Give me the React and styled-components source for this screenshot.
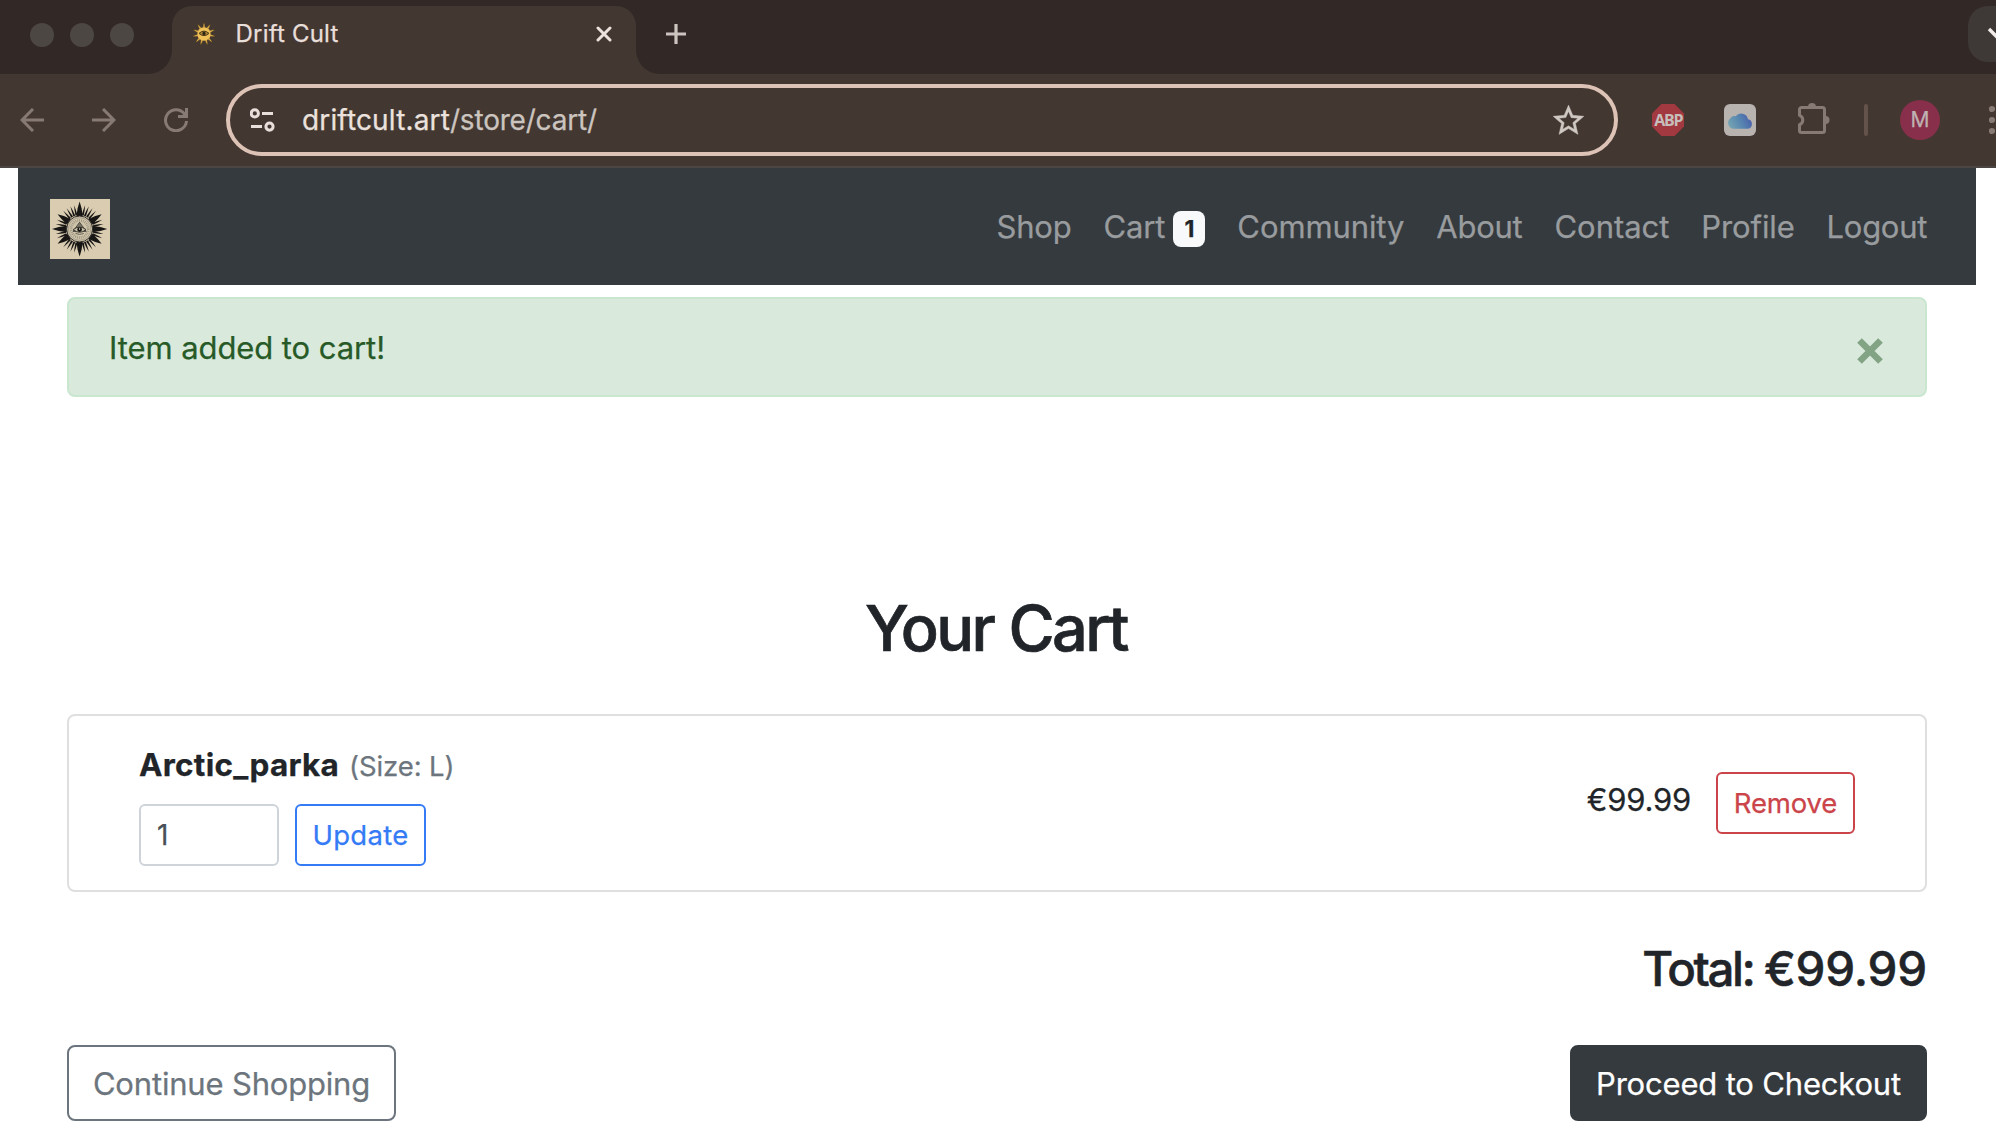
import React from "react";
import styled, { createGlobalStyle } from "styled-components";

const GlobalStyle = createGlobalStyle`
  *, *::before, *::after { box-sizing: border-box; }
  body {
    margin: 0;
    background: #fff;
    color: #212529;
    font-family: Inter, "Liberation Sans", sans-serif;
    -webkit-text-stroke: 0.25px currentColor;
  }
  button, input { font-family: inherit; -webkit-text-stroke: 0.25px currentColor; }
  svg { flex: none; }
`;

const Window = styled.div`
  display: flex;
  flex-direction: column;
  width: 100%;
  height: 1148px;
  overflow: hidden;
`;

/* ---------- browser chrome ---------- */

const TabStrip = styled.div`
  display: flex;
  align-items: flex-start;
  flex: none;
  height: 74px;
  padding: 6px 0 0 30px;
  background: #322926;
`;

const Lights = styled.div`
  display: flex;
  gap: 16px;
  padding-top: 17px;
  margin-right: 38px;
`;

const Light = styled.span`
  width: 24px;
  height: 24px;
  border-radius: 50%;
  background: #4c4742;
`;

const Tab = styled.div`
  position: relative;
  display: flex;
  align-items: center;
  width: 464px;
  height: 68px;
  padding: 0 24px 13px 19px;
  border-radius: 20px 20px 0 0;
  background: #433732;

  &::before,
  &::after {
    content: "";
    position: absolute;
    bottom: 0;
    width: 24px;
    height: 24px;
  }
  &::before {
    left: -24px;
    background: radial-gradient(circle at 0 0, transparent 23.5px, #433732 24.5px);
  }
  &::after {
    right: -24px;
    background: radial-gradient(circle at 100% 0, transparent 23.5px, #433732 24.5px);
  }
`;

const TabTitle = styled.span`
  flex: 1;
  margin-left: 18.5px;
  color: #e9dfda;
  font-size: 24px;
  line-height: 30px;
  letter-spacing: 0.21px;
`;

const NewTab = styled.span`
  display: flex;
  margin: 18px auto 0 30px;
`;

const TabSearch = styled.div`
  display: flex;
  align-items: center;
  width: 28px;
  height: 56px;
  padding-left: 18px;
  border-radius: 20px 0 0 20px;
  background: #3e3936;
  overflow: hidden;
`;

const Toolbar = styled.div`
  display: flex;
  align-items: center;
  flex: none;
  height: 94px;
  padding: 0 1px 0 20px;
  background: #433732;
  border-bottom: 2px solid #4b4543;
`;

const NavIcons = styled.div`
  display: flex;
  gap: 48px;
  margin-right: 38px;
`;

const Omnibox = styled.div`
  display: flex;
  align-items: center;
  flex: 1;
  height: 72px;
  padding: 0 27px 0 20px;
  border: 4px solid #ddc3b6;
  border-radius: 36px;
`;

const Url = styled.span`
  flex: 1;
  margin-left: 27px;
  color: #cbc4bf;
  font-size: 28px;
  line-height: 36px;
  letter-spacing: -0.2px;
`;

const Domain = styled.span`
  color: #ebe2de;
  letter-spacing: 0.15px;
`;

const Extensions = styled.div`
  display: flex;
  align-items: center;
  margin-left: 34px;
`;

const CloudTile = styled.span`
  display: flex;
  align-items: center;
  justify-content: center;
  width: 32px;
  height: 32px;
  margin: 0 40px;
  border-radius: 6px;
  background: #b9b3b0;
`;

const Divider = styled.span`
  width: 4px;
  height: 32px;
  margin: 0 32px;
  border-radius: 2px;
  background: #64534a;
`;

const Avatar = styled.span`
  width: 40px;
  height: 40px;
  margin-right: 48px;
  border-radius: 50%;
  background: #882f4b;
  color: #bfb1b1;
  font-size: 21px;
  line-height: 40px;
  text-align: center;
`;

/* ---------- store page ---------- */

const Page = styled.div`
  display: flex;
  flex-direction: column;
  width: 1958px;
  margin-left: 18px;
`;

const Navbar = styled.nav`
  display: flex;
  align-items: center;
  justify-content: space-between;
  height: 117px;
  padding: 5px 49px 0 32px;
  background: #353a3e;
`;

const NavLinks = styled.div`
  display: flex;
  gap: 32px;
  padding-bottom: 5px;
`;

const NavLink = styled.a`
  display: flex;
  align-items: center;
  color: #999c9e;
  font-size: 31px;
  line-height: 48px;
  letter-spacing: ${(p) => p.$track}px;
`;

const Badge = styled.span`
  width: 32px;
  height: 36px;
  margin: 5px 0 0 8px;
  border-radius: 8px;
  background: #f8f9fa;
  color: #212529;
  font-size: 23px;
  font-weight: 700;
  line-height: 37px;
  text-align: center;
  letter-spacing: 0;
`;

const Content = styled.main`
  display: flex;
  flex-direction: column;
  padding: 12px 49px 0;
`;

const Alert = styled.div`
  display: flex;
  align-items: center;
  justify-content: space-between;
  height: 100px;
  padding: 0 42.5px 0 40px;
  border: 2px solid #c9e6cf;
  border-radius: 8px;
  background: #d9eadc;
  color: #285a28;
  font-size: 31px;
  letter-spacing: -0.08px;
`;

const Dismiss = styled.span`
  display: flex;
  padding-top: 9px;
`;

const Title = styled.h1`
  margin: 192px 0 47px;
  padding-right: 2px;
  font-size: 63px;
  font-weight: 500;
  line-height: 78px;
  letter-spacing: -2.6px;
  word-spacing: 1px;
  text-align: center;
  -webkit-text-stroke: 0.7px currentColor;
`;

const Card = styled.div`
  display: flex;
  align-items: center;
  justify-content: space-between;
  height: 178px;
  padding: 0 70px;
  border: 2px solid #dfdfdf;
  border-radius: 8px;
`;

const Product = styled.div`
  display: flex;
  flex-direction: column;
  gap: 16px;
`;

const ProductName = styled.div`
  display: flex;
  align-items: baseline;
  gap: 10px;
  height: 48px;
  font-size: 31.5px;
  font-weight: 700;
  line-height: 50px;
  letter-spacing: 0.25px;
`;

const Size = styled.span`
  color: #6c757d;
  font-size: 27.5px;
  font-weight: 400;
  letter-spacing: -0.12px;
`;

const Controls = styled.div`
  display: flex;
  align-items: center;
  gap: ${(p) => p.$gap}px;
`;

const Quantity = styled.input`
  width: 140px;
  height: 62px;
  padding: 0 16px;
  border: 2px solid #ced4da;
  border-radius: 6px;
  background: #fff;
  color: #495057;
  font-size: 28px;
  outline: none;
`;

const SmallButton = styled.button`
  width: ${(p) => p.$width}px;
  height: 62px;
  padding: 0;
  border: 2px solid ${(p) => p.$color};
  border-radius: 6px;
  background: transparent;
  color: ${(p) => p.$color};
  font-size: 27.5px;
  letter-spacing: ${(p) => p.$track}px;
`;

const Price = styled.span`
  padding-bottom: 6px;
  font-size: 31px;
  line-height: 48px;
  letter-spacing: -0.2px;
`;

const Total = styled.h3`
  margin: 47px 0 46px;
  font-size: 47.5px;
  font-weight: 500;
  line-height: 60px;
  letter-spacing: -2.4px;
  text-align: right;
  -webkit-text-stroke: 0.5px currentColor;
`;

const Amount = styled.span`
  letter-spacing: -0.2px;
`;

const Actions = styled.div`
  display: flex;
  justify-content: space-between;
`;

const ActionButton = styled.button`
  width: ${(p) => p.$width}px;
  height: 76px;
  padding: 0;
  border: 2px solid ${(p) => (p.$solid ? "#353a3e" : "#6c757d")};
  border-radius: 8px;
  background: ${(p) => (p.$solid ? "#353a3e" : "transparent")};
  color: ${(p) => (p.$solid ? "#fff" : "#6c757d")};
  font-size: 31px;
  letter-spacing: -0.18px;
`;

/* ---------- drawings ---------- */

const ray = (cx, cy, angle, from, to, half) => {
  const a = (angle * Math.PI) / 180;
  const ux = Math.cos(a);
  const uy = -Math.sin(a);
  const pt = (r, o) => `${(cx + ux * r - uy * o).toFixed(2)} ${(cy + uy * r + ux * o).toFixed(2)}`;
  const mid = from + (to - from) * 0.55;
  return `M${pt(from, -half)}L${pt(mid, -half * 0.62)}L${pt(to, 0)}L${pt(mid, half * 0.62)}L${pt(from, half)}Z`;
};

const BIG = [0, 34, 90, 146, 180, 214, 270, 326];
const SMALL = [12, 22, 48, 58, 68, 77];
const smallRays = SMALL.flatMap((a) => [a, 180 - a, 180 + a, 360 - a]);

const SunLogo = () => (
  <svg width="60" height="60" viewBox="0 0 60 60">
    <rect width="60" height="60" fill="#d9ccb0" />
    <g fill="#171615">
      {BIG.map((a) => <path key={a} d={ray(29.6, 30, a, 12.5, a % 90 ? 26.6 : 27.6, 3.2)} />)}
      {smallRays.map((a) => <path key={a} d={ray(29.6, 30, a, 14, 24.4, 1.05)} />)}
    </g>
    <circle cx="29.6" cy="30" r="13" fill="#cfc4aa" stroke="#2f2e2a" strokeWidth="1" />
    <circle cx="29.6" cy="30" r="11.3" fill="none" stroke="#8e8775" strokeWidth="0.6" />
    <circle cx="29.6" cy="30" r="8.6" fill="none" stroke="#99917e" strokeWidth="2.6" strokeDasharray="0.8 1.1" />
    <path d="M29.6 23.2 36.2 32.4H23Z" fill="#7a7567" stroke="#3c3a34" strokeWidth="0.8" />
    <path d="M23.2 30.6q6.4-5 12.8 0-6.4 5.4-12.8 0Z" fill="#c9bfa6" stroke="#33312c" strokeWidth="0.9" />
    <circle cx="29.6" cy="30.6" r="2.3" fill="#11110f" />
    <circle cx="29.6" cy="30" r="0.7" fill="#efe6cf" />
    <path d="M25.5 34.5q4.1 1.8 8.2 0" fill="none" stroke="#5c594e" strokeWidth="0.9" />
  </svg>
);

const Favicon = () => (
  <svg width="26" height="26" viewBox="0 0 26 26">
    {[90, 57, 22, -12, -45, -72, -108, -135, 192, 158, 123].map((a) => (
      <path key={a} d={ray(13, 13, a, 6, 12.2, 1.3)} fill="#d9ab46" stroke="#3a2d1f" strokeWidth="0.6" />
    ))}
    <circle cx="13" cy="13" r="6.7" fill="#efc158" />
    <path d="M8 12.4q5-4.6 10 0-5 4.4-10 0Z" fill="#a98535" stroke="#4a3a1a" strokeWidth="1" />
    <circle cx="13" cy="12.4" r="1.6" fill="#2b2416" />
  </svg>
);

const Stroke = ({ w = 24, h = 24, color = "#877a74", width = 3, cap = "butt", d }) => (
  <svg width={w} height={h} viewBox={`0 0 ${w} ${h}`} fill="none" stroke={color} strokeWidth={width} strokeLinecap={cap}>
    <path d={d} />
  </svg>
);

const Tune = () => (
  <svg width="25" height="24" viewBox="0 0 25 24" fill="none" stroke="#e9dfda" strokeWidth="3">
    <circle cx="4.8" cy="5.4" r="3.6" />
    <path d="M12 5.4h11M1 18.6h11" />
    <circle cx="19.5" cy="18.6" r="3.6" />
  </svg>
);

const Star = () => (
  <svg width="37" height="37" viewBox="0 0 24 24" fill="#cfc7c2" stroke="#cfc7c2" strokeWidth="0.25">
    <path d="M22 9.24l-7.19-.62L12 2 9.19 8.63 2 9.24l5.46 4.73L5.82 21 12 17.27 18.18 21l-1.63-7.03L22 9.24zM12 15.4l-3.76 2.27 1-4.28-3.32-2.88 4.38-.38L12 6.1l1.71 4.04 4.38.38-3.32 2.88 1 4.28L12 15.4z" />
  </svg>
);

const AdBlock = () => (
  <svg width="32" height="32" viewBox="0 0 32 32">
    <path d="M9.4 0h13.2L32 9.4v13.2L22.6 32H9.4L0 22.6V9.4Z" fill="#a23940" />
    <text x="2.2" y="21.8" fill="#c6bebb" fontFamily="Open Sans, sans-serif" fontWeight="700" fontSize="16" letterSpacing="-1.2">ABP</text>
  </svg>
);

const Cloud = () => (
  <svg width="26" height="17" viewBox="0 0 26 17">
    <defs>
      <linearGradient id="sky" x1="0" y1="0.7" x2="1" y2="0.4">
        <stop offset="0" stopColor="#76a4b2" />
        <stop offset="0.55" stopColor="#5684b0" />
        <stop offset="1" stopColor="#4a5faa" />
      </linearGradient>
    </defs>
    <path d="M6 16.8A5.8 5.8 0 0 1 3.2 6.6 4.4 4.4 0 0 1 8.6 4.3 7 7 0 0 1 21 7.2 4.9 4.9 0 0 1 21 16.8Z" fill="url(#sky)" />
  </svg>
);

const Puzzle = () => (
  <svg width="36" height="36" viewBox="0 0 36 36">
    <path d="M5.5 5.5h21a2 2 0 0 1 2 2v21a2 2 0 0 1-2 2h-21a2 2 0 0 1-2-2v-5.8a5 5 0 0 0 0-9.4V7.5a2 2 0 0 1 2-2Z" fill="none" stroke="#877a74" strokeWidth="3" strokeLinejoin="round" />
    <path d="M12 5a4 4 0 0 1 8 0ZM29.5 14a4 4 0 0 1 0 8Z" fill="#877a74" />
  </svg>
);

const Dots = () => (
  <svg width="7" height="30" viewBox="0 0 7 30" fill="#877a74">
    <circle cx="4" cy="4" r="3.1" />
    <circle cx="4" cy="15" r="3.1" />
    <circle cx="4" cy="26" r="3.1" />
  </svg>
);

const LINKS = [
  { label: "Shop", track: -0.17 },
  { label: "Cart", track: -0.15, badge: "1" },
  { label: "Community", track: -0.1 },
  { label: "About", track: -0.25 },
  { label: "Contact", track: -0.04 },
  { label: "Profile", track: -0.12 },
  { label: "Logout", track: -0.3 },
];

export default function App() {
  return (
    <Window>
      <GlobalStyle />
      <TabStrip>
        <Lights><Light /><Light /><Light /></Lights>
        <Tab>
          <Favicon />
          <TabTitle>Drift Cult</TabTitle>
          <Stroke w={16} h={16} color="#ebe2de" width={3} cap="round" d="M2 2l12 12M14 2L2 14" />
        </Tab>
        <NewTab><Stroke w={20} h={20} color="#cbc4bf" width={3.2} d="M10 0v20M0 10h20" /></NewTab>
        <TabSearch><Stroke w={28} h={16} color="#f2ece9" width={3.4} d="M3 3l9 9 9-9" /></TabSearch>
      </TabStrip>
      <Toolbar>
        <NavIcons>
          <Stroke d="M24 12H2M13 1 2 12l11 11" />
          <Stroke d="M0 12h22M11 1l11 11-11 11" />
          <Stroke d="M22.5 13A10.5 10.5 0 1 1 20.5 6L22 9M22.5 0v8.5H14" />
        </NavIcons>
        <Omnibox>
          <Tune />
          <Url><Domain>driftcult.art</Domain>/store/cart/</Url>
          <Star />
        </Omnibox>
        <Extensions>
          <AdBlock />
          <CloudTile><Cloud /></CloudTile>
          <Puzzle />
          <Divider />
          <Avatar>M</Avatar>
          <Dots />
        </Extensions>
      </Toolbar>
      <Page>
        <Navbar>
          <SunLogo />
          <NavLinks>
            {LINKS.map((l) => (
              <NavLink key={l.label} $track={l.track}>
                {l.label}
                {l.badge && <Badge>{l.badge}</Badge>}
              </NavLink>
            ))}
          </NavLinks>
        </Navbar>
        <Content>
          <Alert>
            Item added to cart!
            <Dismiss><Stroke w={26} h={28} color="#83a385" width={6.6} d="M2.5 2.5l21 21M23.5 2.5l-21 21" /></Dismiss>
          </Alert>
          <Title>Your Cart</Title>
          <Card>
            <Product>
              <ProductName>Arctic_parka <Size>(Size: L)</Size></ProductName>
              <Controls $gap={16}>
                <Quantity defaultValue="1" />
                <SmallButton $width={131} $color="#357bf6" $track={0.3}>Update</SmallButton>
              </Controls>
            </Product>
            <Controls $gap={25}>
              <Price>€99.99</Price>
              <SmallButton $width={139} $color="#cb444a" $track={-0.16}>Remove</SmallButton>
            </Controls>
          </Card>
          <Total>Total: <Amount>€99.99</Amount></Total>
          <Actions>
            <ActionButton $width={329}>Continue Shopping</ActionButton>
            <ActionButton $width={357} $solid>Proceed to Checkout</ActionButton>
          </Actions>
        </Content>
      </Page>
    </Window>
  );
}
